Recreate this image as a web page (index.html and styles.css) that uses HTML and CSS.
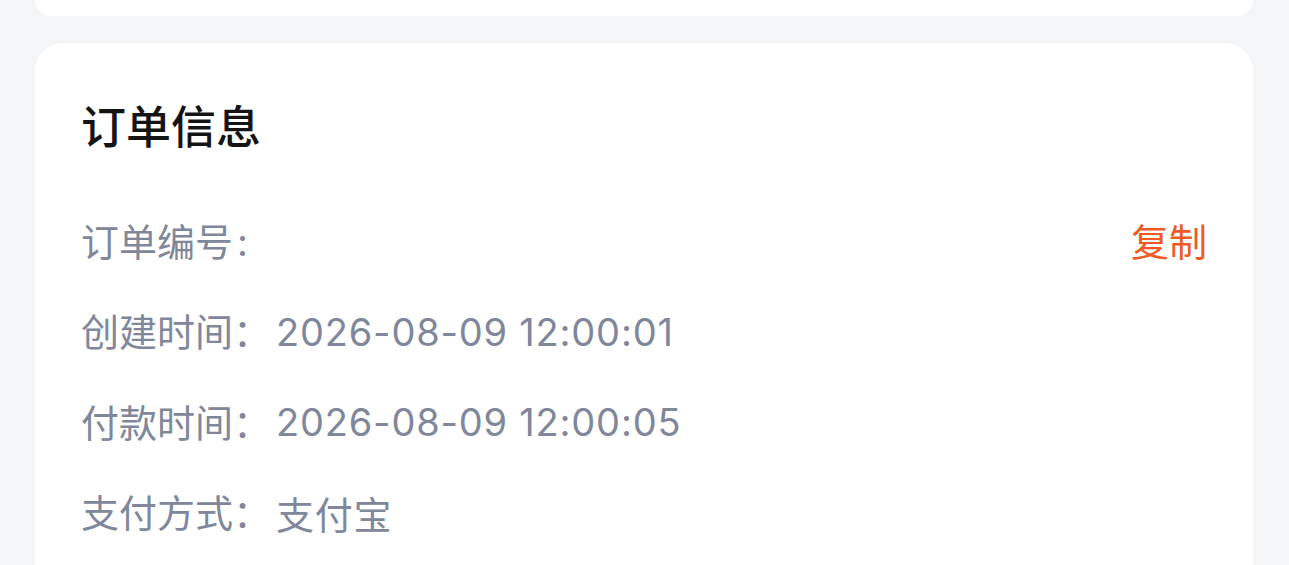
FILE: index.html
```html
<!DOCTYPE html>
<html lang="zh-CN">
<head>
    <meta charset="UTF-8">
    <meta name="viewport" content="width=device-width, initial-scale=1.0">
    <title>订单详情</title>
    <link rel="stylesheet" href="styles.css">
</head>
<body>
    <div class="card card-prev"></div>

    <div class="card order-info">
        <h2 class="card-title">订单信息</h2>

        <div class="info-row">
            <span class="info-label">订单编号<span class="colon">:</span></span>
            <span class="info-value"></span>
            <button class="copy-btn">复制</button>
        </div>
        <div class="info-row">
            <span class="info-label">创建时间：</span>
            <span class="info-value">2026-08-09 12:00:01</span>
        </div>
        <div class="info-row">
            <span class="info-label">付款时间：</span>
            <span class="info-value">2026-08-09 12:00:05</span>
        </div>
        <div class="info-row">
            <span class="info-label">支付方式：</span>
            <span class="info-value">支付宝</span>
        </div>
    </div>
</body>
</html>
```

FILE: styles.css
```css
* {
    margin: 0;
    padding: 0;
    box-sizing: border-box;
}

body {
    font-family: Inter, "Noto Sans CJK SC", sans-serif;
    background: #f4f5f7;
    color: #111;
    overflow: hidden;
}

.card {
    background: #fff;
    border-radius: 28px;
    margin: 0 36px 0 35px;
}

/* the card above, scrolled mostly out of view */
.card-prev {
    height: 16px;
    border-radius: 0 0 28px 28px;
    margin-bottom: 27px;
}

.order-info {
    padding: 54px 46px 60px 46px;
}

.card-title {
    font-size: 45px;
    font-weight: 500;
    line-height: 62px;
    color: #141414;
    margin-bottom: 35px;
}

.info-row {
    display: flex;
    align-items: center;
    height: 90.5px;
    font-size: 38px;
    color: #80879a;
}

.info-row + .info-row .info-value {
    padding-top: 4px;
}

.colon {
    margin-left: 4px;
}

.info-value {
    flex: 1;
    margin-left: 5px;
    letter-spacing: 0.8px;
}

.copy-btn {
    border: none;
    background: none;
    font: inherit;
    color: #ee5a24;
    cursor: pointer;
}
```
